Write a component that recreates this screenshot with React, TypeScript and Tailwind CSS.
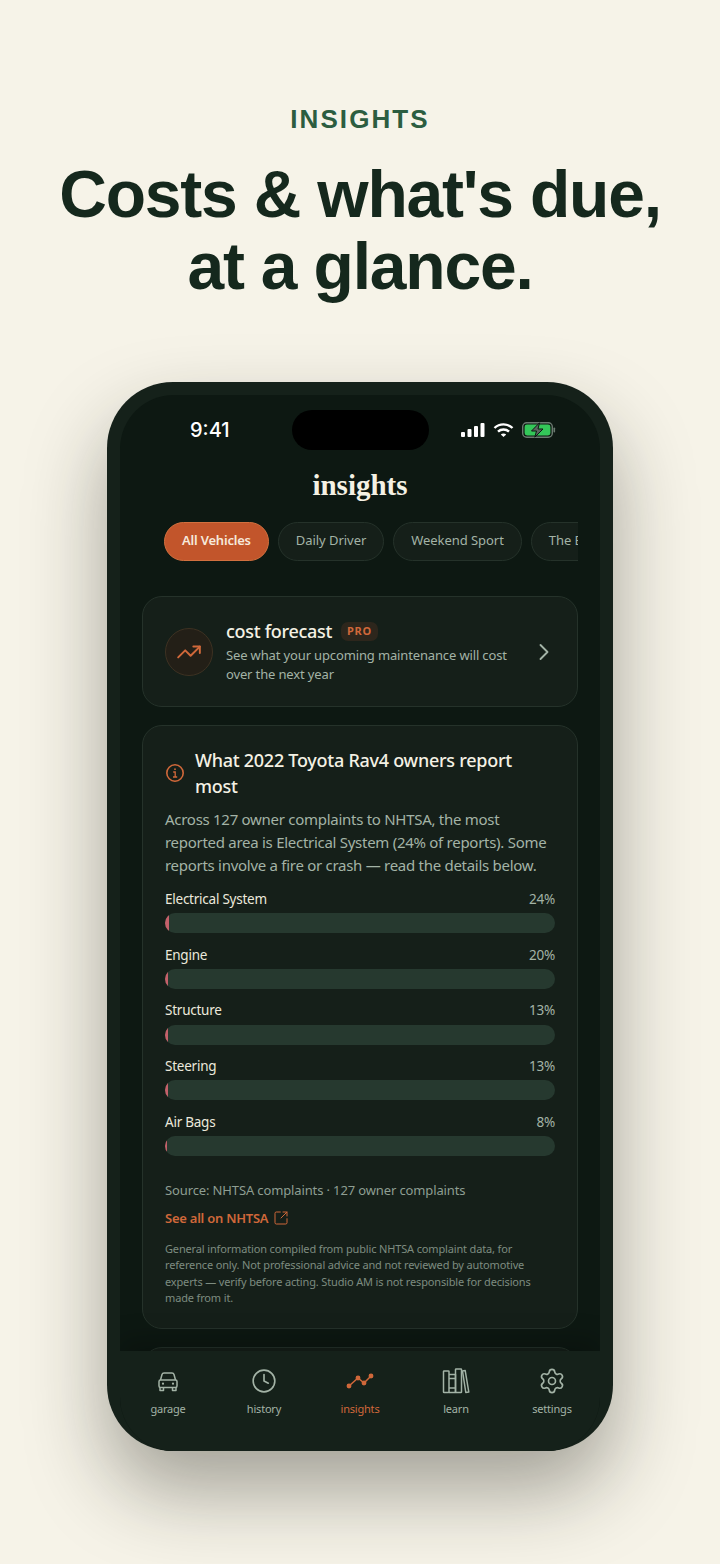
import { ChevronRight, Clock, Settings, SquareArrowOutUpRight, TrendingUp } from 'lucide-react'

const sans = "font-['Noto_Sans',sans-serif]"

const reports = [
    { label: 'Electrical System', pct: '24%', fill: 3.5 },
    { label: 'Engine', pct: '20%', fill: 3 },
    { label: 'Structure', pct: '13%', fill: 2.5 },
    { label: 'Steering', pct: '13%', fill: 2.5 },
    { label: 'Air Bags', pct: '8%', fill: 1.5 },
]

function StatusIcons() {
    return (
        <div className="flex items-center gap-[8px]">
            <svg width="24" height="16" viewBox="0 0 24 16" fill="#fff">
                <rect x="0" y="10" width="4" height="5" rx="1" />
                <rect x="6.5" y="7" width="4" height="8" rx="1" />
                <rect x="13" y="4" width="4" height="11" rx="1" />
                <rect x="19.5" y="1" width="4" height="14" rx="1" />
            </svg>
            <svg width="21" height="16" viewBox="0 0 21 16" fill="none" stroke="#fff" strokeWidth="2.4">
                <path d="M1.5 6 C6.5 1.2 14.5 1.2 19.5 6" />
                <path d="M5 9.6 C8 6.8 13 6.8 16 9.6" />
                <path d="M10.5 15 L7.8 12.4 C9.3 11.2 11.7 11.2 13.2 12.4 Z" fill="#fff" stroke="none" />
            </svg>
            <svg width="34" height="16" viewBox="0 0 34 16" fill="none">
                <rect x="0.7" y="0.7" width="29.6" height="14.6" rx="4" stroke="#6b7a70" strokeWidth="1.4" />
                <rect x="2.6" y="2.6" width="25.8" height="10.8" rx="2.4" fill="#34c759" />
                <rect x="31.5" y="5.5" width="1.6" height="5" rx="0.8" fill="#6b7a70" />
                <path d="M17.5 0.8 L9.5 9 H14.5 L12.8 15.2 L21 7 H16 Z" fill="#5b6660" stroke="#0d1812" strokeWidth="1" />
            </svg>
        </div>
    )
}

function Chip({ label, active }: { label: string; active?: boolean }) {
    return (
        <div
            className={`h-[39px] shrink-0 rounded-[20px] border flex items-center px-[17px] pb-[1px] text-[13px] ${
                active
                    ? 'bg-[#c2552b] border-[#d2703f] text-[#f6e9dc] font-semibold tracking-[-0.2px]'
                    : 'bg-[#151f19] border-[#25322a] text-[#a3b3a6] tracking-[-0.05px]'
            }`}
        >
            {label}
        </div>
    )
}

function ReportRow({ label, pct, fill }: { label: string; pct: string; fill: number }) {
    return (
        <div className="flex flex-col h-[55.8px]">
            <div className="flex justify-between items-center h-[22px] text-[13.5px] tracking-[-0.24px]">
                <span className="text-[#ece9dc]">{label}</span>
                <span className="text-[#a3b3a6]">{pct}</span>
            </div>
            <div className="h-[20px] mt-[3px] rounded-[10px] bg-[#26392f] overflow-hidden">
                <div className="h-full bg-[#c4606a]" style={{ width: fill }} />
            </div>
        </div>
    )
}

function InfoIcon() {
    return (
        <svg width="20" height="20" viewBox="0 0 20 20" fill="none" stroke="#d0683a" strokeWidth="1.6" className="shrink-0">
            <circle cx="10" cy="10" r="8.2" />
            <path d="M8.2 9 H10.2 V14 M8 14 H12.2" strokeWidth="1.3" />
            <circle cx="10" cy="6.2" r="0.9" fill="#d0683a" stroke="none" />
        </svg>
    )
}

function NavCar() {
    return (
        <svg width="24" height="24" viewBox="0 0 24 24" fill="none" stroke="#a3b3a6" strokeWidth="1.5" strokeLinejoin="round">
            <path d="M4.5 11 L6 5.5 Q6.5 4 8 4 H16 Q17.5 4 18 5.5 L19.5 11" />
            <rect x="3" y="11" width="18" height="7.5" rx="1.5" />
            <path d="M4 18.5 V21.5 H7.5 V18.5 M16.5 18.5 V21.5 H20 V18.5" />
            <circle cx="7" cy="14.7" r="1.1" fill="#a3b3a6" stroke="none" />
            <circle cx="17" cy="14.7" r="1.1" fill="#a3b3a6" stroke="none" />
        </svg>
    )
}

function NavChart() {
    return (
        <svg width="28" height="28" viewBox="0 0 28 28" fill="none" stroke="#d0683a" strokeWidth="1.5">
            <path d="M3 19 L12 11 L18 16 L25 9" />
            <circle cx="3" cy="19" r="1.7" fill="#d0683a" />
            <circle cx="12" cy="11" r="1.7" fill="#d0683a" />
            <circle cx="18" cy="16" r="1.7" fill="#d0683a" />
            <circle cx="25" cy="9" r="1.7" fill="#d0683a" />
        </svg>
    )
}

function NavBooks() {
    return (
        <svg width="28" height="28" viewBox="0 0 28 28" fill="none" stroke="#a3b3a6" strokeWidth="1.5" strokeLinejoin="round">
            <rect x="1.5" y="4" width="5.5" height="21.5" rx="0.6" />
            <path d="M7 7.5 H13.5 V25.5 H7 M7 11.5 H13.5 M7 21 H13.5" />
            <rect x="13.5" y="2" width="6" height="23.5" rx="0.6" />
            <path d="M20.5 4 L23.2 3.6 L26.8 25 L23.8 25.5 Z" />
        </svg>
    )
}

function NavItem({ label, icon, active }: { label: string; icon: React.ReactNode; active?: boolean }) {
    return (
        <div className="flex-1 flex flex-col items-center">
            <div className="h-[28px] flex items-center justify-center">{icon}</div>
            <span className={`mt-[6px] text-[11px] leading-[16px] tracking-[-0.2px] ${active ? 'text-[#d0683a]' : 'text-[#a3b3a6]'}`}>{label}</span>
        </div>
    )
}

export default function App() {
    return (
        <div className="w-[720px] h-[1564px] bg-[#f6f3e8] overflow-hidden flex flex-col items-center">
            <div className="mt-[103px] font-['Liberation_Sans',sans-serif] font-bold text-[26px] leading-[32px] tracking-[0.08em] text-[#2c5d40]">
                INSIGHTS
            </div>
            <h1 className="mt-[23px] font-['Liberation_Sans',sans-serif] font-bold text-[66px] leading-[72px] tracking-[-1.2px] text-center text-[#15281d]">
                Costs &amp; what's due,
                <br />
                at a glance.
            </h1>

            {/* Phone */}
            <div className="mt-[80px] w-[506px] h-[1069px] shrink-0 rounded-[66px] bg-[#15211a] p-[13px] pb-0 shadow-[0_40px_80px_rgba(30,30,20,0.38)]">
                <div className={`relative h-full flex flex-col rounded-t-[54px] rounded-b-[54px] overflow-hidden bg-[#0d1812] ${sans}`}>
                    <div className="absolute top-[15px] left-[172px] w-[137px] h-[40px] rounded-[20px] bg-black" />

                    <div className="h-[70px] shrink-0 flex items-center justify-between pl-[70px] pr-[44px]">
                        <span className="font-['Inter',sans-serif] font-medium text-[20px] leading-[24px] text-white">9:41</span>
                        <StatusIcons />
                    </div>

                    <div className="text-center font-['Liberation_Serif',serif] font-bold text-[29px] leading-[40px] text-[#f4f1e4]">
                        insights
                    </div>

                    <div className="mt-[17px] ml-[44px] w-[414px] flex gap-[9px] overflow-hidden shrink-0">
                        <Chip label="All Vehicles" active />
                        <Chip label="Daily Driver" />
                        <Chip label="Weekend Sport" />
                        <Chip label="The Bronco" />
                    </div>

                    <div className="flex-1 min-h-0 overflow-hidden px-[22px] pt-[35px] flex flex-col gap-[18px]">
                        <div className="h-[111px] shrink-0 rounded-[20px] border border-[#25322a] bg-[#151f19] flex items-center pl-[22px] pr-[19px]">
                            <div className="w-[48px] h-[48px] shrink-0 rounded-full bg-[#231f17] border border-[#3d3122] flex items-center justify-center">
                                <TrendingUp size={26} strokeWidth={1.8} color="#d0683a" />
                            </div>
                            <div className="ml-[13px] flex-1">
                                <div className="flex items-center gap-[9px]">
                                    <span className="text-[18px] leading-[24px] font-medium tracking-[-0.3px] text-[#f4f1e4]">cost forecast</span>
                                    <span className="h-[19px] px-[6px] rounded-[7px] bg-[#2d261c] text-[#d0683a] text-[11px] font-bold tracking-[0.06em] flex items-center">PRO</span>
                                </div>
                                <p className="mt-[3px] text-[13px] leading-[19px] tracking-[-0.14px] text-[#a3b3a6]">
                                    See what your upcoming maintenance will cost over the next year
                                </p>
                            </div>
                            <ChevronRight size={28} strokeWidth={1.6} color="#a3b3a6" className="shrink-0" />
                        </div>

                        <div className="shrink-0 rounded-[20px] border border-[#25322a] bg-[#151f19] px-[22px] pt-[21px] pb-[21px]">
                            <div className="flex items-center gap-[10px]">
                                <InfoIcon />
                                <div className="text-[18px] leading-[26px] font-medium tracking-[-0.26px] text-[#f4f1e4]">What 2022 Toyota Rav4 owners report most</div>
                            </div>
                            <p className="mt-[9px] text-[15px] leading-[23px] tracking-[-0.28px] text-[#a3b3a6]">
                                Across 127 owner complaints to NHTSA, the most reported area is Electrical System (24% of reports). Some reports involve a fire or crash — read the details below.
                            </p>
                            <div className="mt-[11px]">
                                {reports.map(r => (
                                    <ReportRow key={r.label} label={r.label} pct={r.pct} fill={r.fill} />
                                ))}
                            </div>
                            <div className="mt-[13px] text-[13px] leading-[20px] tracking-[-0.13px] text-[#8e9e92]">Source: NHTSA complaints · 127 owner complaints</div>
                            <div className="mt-[8px] flex items-center gap-[5px] text-[13px] leading-[20px] font-semibold tracking-[-0.24px] text-[#d0683a]">
                                See all on NHTSA
                                <SquareArrowOutUpRight size={16} strokeWidth={1.5} />
                            </div>
                            <p className="mt-[13px] text-[11px] leading-[16.4px] tracking-[-0.15px] text-[#7d8c80]">
                                General information compiled from public NHTSA complaint data, for reference only. Not professional advice and not reviewed by automotive experts — verify before acting. Studio AM is not responsible for decisions made from it.
                            </p>
                        </div>

                        <div className="h-[40px] shrink-0 rounded-[20px] border border-[#25322a] bg-[#151f19]" />
                    </div>

                    <div className="relative h-[100px] shrink-0 bg-[#15211a] flex pt-[16px] shadow-[0_-12px_24px_rgba(0,0,0,0.22)]">
                        <NavItem label="garage" icon={<NavCar />} />
                        <NavItem label="history" icon={<Clock size={26} strokeWidth={1.5} color="#a3b3a6" />} />
                        <NavItem label="insights" icon={<NavChart />} active />
                        <NavItem label="learn" icon={<NavBooks />} />
                        <NavItem label="settings" icon={<Settings size={28} strokeWidth={1.4} color="#a3b3a6" />} />
                    </div>
                </div>
            </div>
        </div>
    )
}
